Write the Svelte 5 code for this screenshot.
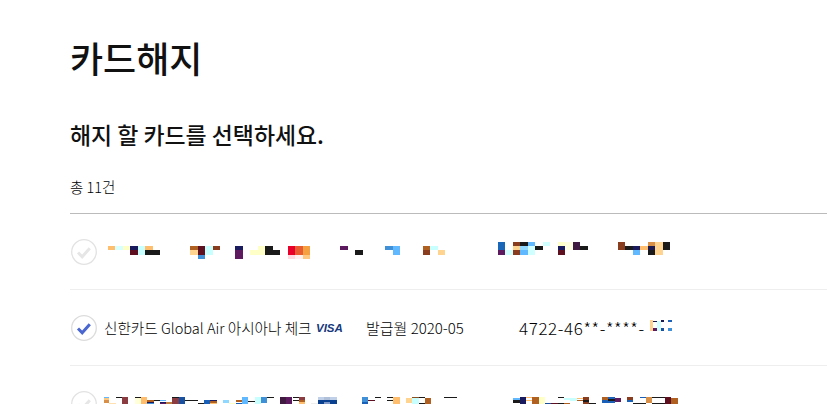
<script>
	// masked card names come out as colour blocks: [x0, x1, y0, y1, colour], in page px
	const k = '#1a1a1a', n = '#1a1a5e', p = '#5e1a5e', m = '#5e1020', r = '#8a3c1e', o = '#b06020';
	const s = '#ffbe6e', t = '#ffd490', c = '#c8ffff', y = '#ffffc8', l = '#60b8ff', b = '#4090d8', u = '#1a60b8';

	const blocksTop = [
		[108,115,246,250,s],[115,123,246,250,'#d8ffff'],[123,130,246,250,y],[130,138,246,250,n],[130,138,250,255,m],
		[138,145,246,255,c],[145,153,246,250,s],[145,160,250,255,k],
		[190,198,246,250,o],[190,198,250,255,t],[198,205,246,255,m],[198,205,255,259,b],[205,213,246,255,c],[213,220,246,250,r],
		[235,243,246,250,n],[235,243,250,259,p],[250,258,250,255,y],[258,265,246,255,y],[265,273,246,255,k],[273,280,250,255,k],
		[288,295,246,255,'#e8002a'],[288,295,255,259,'#ffd8e0'],[295,303,246,255,'#e85a30'],[295,303,255,259,'#fff0f0'],
		[303,310,246,255,'#f5a040'],[303,310,255,259,'#ffc880'],
		[340,348,246,250,p],[355,363,250,255,k],
		[385,393,246,250,b],[393,400,246,255,l],
		[423,430,246,250,o],[423,430,250,255,r],[430,438,246,250,c],[438,445,250,255,t],
		[498,505,242,250,'#1a66b8'],[498,505,250,255,p],[505,513,250,255,'#d0ffff'],
		[513,520,242,246,r],[513,520,246,250,t],[513,520,250,255,r],
		[520,528,242,246,k],[520,528,246,250,'#90d8ff'],[520,528,250,255,l],
		[528,535,242,246,l],[528,535,246,255,'#d0ffff'],[535,543,246,250,k],[543,550,242,246,'#d0ffff'],
		[558,565,242,246,y],[558,565,246,250,n],[558,565,250,255,m],[565,573,242,250,'#ffffe0'],[573,580,242,250,'#401a40'],[580,588,246,250,k],
		[618,625,242,250,r],[625,633,246,250,k],[633,640,246,250,n],[633,640,250,255,l],[640,648,246,250,s],
		[648,655,242,246,'#d89048'],[648,655,246,250,'#1a1a50'],[648,655,250,255,k],[655,663,242,255,t],[663,670,242,250,k]
	];

	const blocksBottom = [
		[103,109,397,398,l],[103,109,398,400,'#ffc880'],[103,109,400,403,'#d89048'],[109,116,403,404,'#ffe0b0'],[116,122,397,398,k],[122,128,397,404,'#8a3c40'],
		[135,141,397,398,k],[135,141,398,404,'#ffffd8'],[141,147,397,404,s],[147,154,400,402,o],[147,154,402,403,n],[147,154,403,404,b],[154,160,400,401,k],
		[160,166,400,401,l],[160,166,402,403,n],[160,166,403,404,p],[166,172,402,404,'#c08040'],[172,179,397,398,k],[172,179,398,404,'#8a3c40'],[179,185,397,404,'#1a50a0'],
		[185,198,400,401,k],[198,204,403,404,k],[204,210,400,404,u],[210,217,400,401,n],[210,217,401,403,o],[210,217,403,404,s],
		[223,229,400,403,'#90d8ff'],[229,236,403,404,y],[236,242,400,402,o],[236,242,403,404,u],[242,248,397,404,l],[248,255,401,402,k],
		[255,261,397,404,c],[261,267,397,403,b],[267,274,397,398,k],[280,286,397,404,'#401a40'],[286,292,397,404,p],
		[293,299,397,398,k],[293,299,400,401,k],[299,305,397,400,'#8a3c40'],[299,305,400,402,o],[299,305,402,404,s],[311,318,403,404,'#eeeeee'],
		[318,324,397,400,'#c0d0e8'],[318,324,400,404,'#0a4090'],[324,330,397,400,'#b0c0d8'],[324,330,400,402,'#0a4090'],[324,330,402,404,'#8098c8'],
		[330,337,397,400,'#c0d0e8'],[330,337,400,404,'#0a4090'],
		[362,368,397,402,b],[362,368,402,404,u],[368,375,400,401,m],[375,381,397,398,k],[387,393,397,398,k],[387,393,400,401,k],[393,400,397,404,s],
		[406,412,398,403,t],[412,419,397,398,'#8a5020'],[412,419,398,404,c],[419,425,397,398,k],[419,425,403,404,k],[425,431,398,404,o],[444,457,397,398,k],
		[513,520,398,400,l],[513,520,400,403,k],[520,526,397,404,n],[526,532,397,398,s],[526,532,400,401,s],[532,539,397,404,o],[539,545,397,404,y],
		[545,551,403,404,'#1a50a0'],[551,558,403,404,m],[558,564,397,398,k],[558,564,403,404,k],[564,570,398,400,c],[564,570,403,404,o],
		[570,577,398,401,c],[577,583,398,399,s],[577,583,400,401,o],[583,589,397,400,r],[583,589,400,402,k],[583,589,402,404,r],[589,596,403,404,k],
		[602,608,397,400,o],[602,608,400,403,u],[608,615,397,399,u],[608,615,399,401,k],[608,615,401,403,u],[615,621,398,402,p],
		[627,633,397,400,r],[627,633,400,402,u],[633,640,403,404,k],[640,646,397,398,u],[640,646,403,404,k],[646,652,397,403,'#d89048'],
		[652,665,397,398,k],[652,665,403,404,k],[665,671,397,404,m],[671,678,398,404,o]
	];

	const blocksNumber = [
		[650,653,320,331,t],[653,657,321,322,'#1a1a50'],[653,657,328,331,p],[657,661,321,331,'#d0ffff'],
		[661,664,320,322,'#1a1a50'],[661,664,328,331,'#1a50a0'],[668,672,320,322,u],[668,672,328,331,b]
	];
</script>

<main class="page">
	<h1>카드해지</h1>
	<h2>해지 할 카드를 선택하세요.</h2>
	<p class="total">총 11건</p>

	<ul class="list">
		<li class="row">
			<svg class="check" viewBox="0 0 26 26" width="26" height="26">
				<circle cx="13" cy="13" r="12.3" fill="#fff" stroke="#e2e2e2" stroke-width="1.3" />
				<path d="M7 13.5l4.2 4.2 7.6-8.4" fill="none" stroke="#e6e6e6" stroke-width="3" />
			</svg>
			<svg class="mask" viewBox="104 239 600 26" width="600" height="26">
				{#each blocksTop as [x0, x1, y0, y1, fill]}
					<rect x={x0} y={y0} width={x1 - x0} height={y1 - y0} {fill} />
				{/each}
			</svg>
		</li>

		<li class="row">
			<svg class="check" viewBox="0 0 26 26" width="26" height="26">
				<circle cx="13" cy="13" r="12.3" fill="#fff" stroke="#dcdcdc" stroke-width="1.3" />
				<path d="M7 13.5l4.2 4.2 7.6-8.4" fill="none" stroke="#4a66d0" stroke-width="3" />
			</svg>
			<span class="name">신한카드 Global Air 아시아나 체크</span>
			<span class="visa">VISA</span>
			<span class="date">발급월 2020-05</span>
			<span class="number">4722-46**-****-</span>
			<svg class="mask-number" viewBox="650 315 24 26" width="24" height="26">
				{#each blocksNumber as [x0, x1, y0, y1, fill]}
					<rect x={x0} y={y0} width={x1 - x0} height={y1 - y0} {fill} />
				{/each}
			</svg>
		</li>

		<li class="row">
			<svg class="check" viewBox="0 0 26 26" width="26" height="26">
				<circle cx="13" cy="13" r="12.3" fill="#fff" stroke="#e2e2e2" stroke-width="1.3" />
				<path d="M7 13.5l4.2 4.2 7.6-8.4" fill="none" stroke="#e6e6e6" stroke-width="3" />
			</svg>
			<svg class="mask" viewBox="104 391 600 26" width="600" height="26">
				{#each blocksBottom as [x0, x1, y0, y1, fill]}
					<rect x={x0} y={y0} width={x1 - x0} height={y1 - y0} {fill} />
				{/each}
			</svg>
		</li>
	</ul>
</main>

<style>
	:global(body) {
		margin: 0;
		background: #fff;
		overflow: hidden;
	}
	.page {
		height: 404px;
		overflow: hidden;
		padding-left: 70px;
		color: #111;
		font-family: "Noto Sans CJK KR", "Noto Sans", sans-serif;
	}
	h1 {
		margin: 0;
		padding-top: 35px;
		font-size: 36px;
		line-height: 44px;
		font-weight: 500;
	}
	h2 {
		margin: 0;
		padding-top: 41px;
		font-size: 22.9px;
		line-height: 28px;
		font-weight: 500;
	}
	.total {
		margin: 0;
		padding-top: 29px;
		font-size: 14.5px;
		line-height: 20px;
		font-weight: 300;
		color: #000;
	}
	.list {
		list-style: none;
		margin: 16px 0 0;
		padding: 0;
		border-top: 1px solid #bbb;
	}
	.row {
		display: flex;
		align-items: center;
		height: 74px;
		padding: 1px 0 0 1px;
		border-bottom: 1px solid #eee;
	}
	.check {
		flex: none;
		margin-right: 7px;
	}
	.mask {
		flex: none;
	}
	.name {
		width: 212px;
		flex: none;
		padding-bottom: 2px;
		font-size: 14.6px;
		font-weight: 300;
		color: #000;
		white-space: nowrap;
	}
	.visa {
		width: 50px;
		flex: none;
		font-family: "Liberation Sans", sans-serif;
		font-size: 11.5px;
		font-weight: 700;
		font-style: italic;
		color: #16387c;
	}
	.date {
		width: 153px;
		flex: none;
		padding-bottom: 2px;
		font-size: 15px;
		font-weight: 300;
		color: #000;
	}
	.number {
		width: 131px;
		flex: none;
		padding-bottom: 2px;
		font-size: 17px;
		font-weight: 300;
		letter-spacing: 0.6px;
		color: #000;
		white-space: nowrap;
	}
	.mask-number {
		flex: none;
	}
</style>
